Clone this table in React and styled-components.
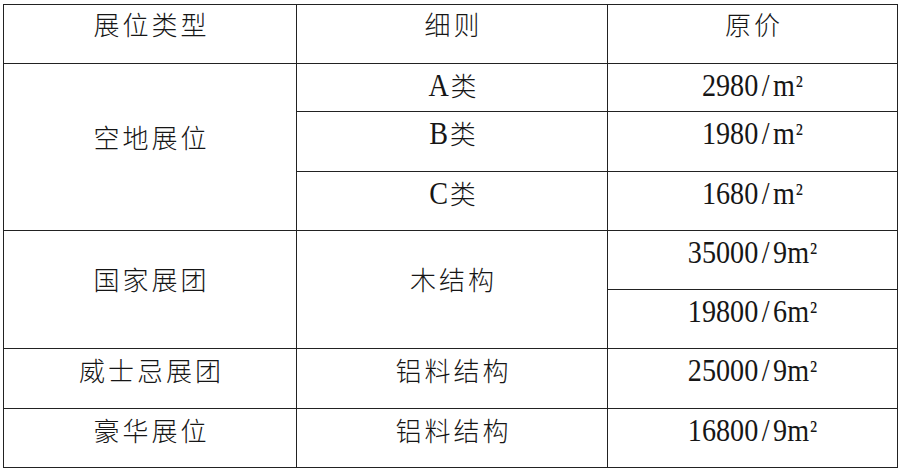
import React from "react";
import styled, { createGlobalStyle } from "styled-components";

const Global = createGlobalStyle`
  html, body { margin: 0; padding: 0; background: #fff; }
  body { font-family: "Noto Sans CJK SC", sans-serif; }
`;

const Table = styled.div`
  display: grid;
  grid-template-columns: 292px 310px 289px;
  grid-template-rows: 58px 47px 59px 58px 58px 58px 59px 58px;
  gap: 1px;
  background: #222;
  border: 1px solid #222;
  width: max-content;
  margin: 4px 0 0 3px;
`;

const Cell = styled.div`
  background: #fff;
  display: flex;
  justify-content: center;
  align-items: ${(p) => (p.$middle ? "center" : "flex-start")};
  padding: ${(p) =>
    p.$middle ? `0 0 ${p.$lift || 20}px 3px` : `${p.$top ?? 6}px 0 0 ${p.$num ? 0 : 3}px`};
  grid-row: span ${(p) => p.$span || 1};
  font-family: "Noto Sans CJK SC", sans-serif;
  font-weight: 300;
  font-size: 26px;
  letter-spacing: 3px;
  line-height: 30px;
  color: #161616;
  white-space: nowrap;
`;

const Latin = styled.span`
  display: inline-block;
  font-family: "Liberation Serif", "DejaVu Serif", serif;
  font-weight: 400;
  font-size: 32px;
  letter-spacing: 0;
  transform: scaleX(0.88);
  transform-origin: center;
`;

const Slash = styled.span`
  margin: 0 4px;
`;

const Sup = styled.span`
  display: inline-block;
  font-size: 27px;
  vertical-align: 2px;
  margin-left: 1px;
`;

const Price = ({ n, u = "" }) => (
  <Latin>
    {n}
    <Slash>/</Slash>
    {u}m<Sup>²</Sup>
  </Latin>
);

export default function App() {
  return (
    <>
      <Global />
      <Table>
        <Cell $top={4}>展位类型</Cell>
        <Cell $top={4}>细则</Cell>
        <Cell $top={4}>原价</Cell>

        <Cell $span={3} $middle $lift={21}>空地展位</Cell>
        <Cell>
          <Latin>A</Latin>类
        </Cell>
        <Cell $num>
          <Price n="2980" />
        </Cell>
        <Cell>
          <Latin>B</Latin>类
        </Cell>
        <Cell $num>
          <Price n="1980" />
        </Cell>
        <Cell>
          <Latin>C</Latin>类
        </Cell>
        <Cell $num>
          <Price n="1680" />
        </Cell>

        <Cell $span={2} $middle $lift={22}>国家展团</Cell>
        <Cell $span={2} $middle $lift={22}>木结构</Cell>
        <Cell $num>
          <Price n="35000" u="9" />
        </Cell>
        <Cell $num>
          <Price n="19800" u="6" />
        </Cell>

        <Cell>威士忌展团</Cell>
        <Cell>铝料结构</Cell>
        <Cell $num>
          <Price n="25000" u="9" />
        </Cell>

        <Cell>豪华展位</Cell>
        <Cell>铝料结构</Cell>
        <Cell $num>
          <Price n="16800" u="9" />
        </Cell>
      </Table>
    </>
  );
}
